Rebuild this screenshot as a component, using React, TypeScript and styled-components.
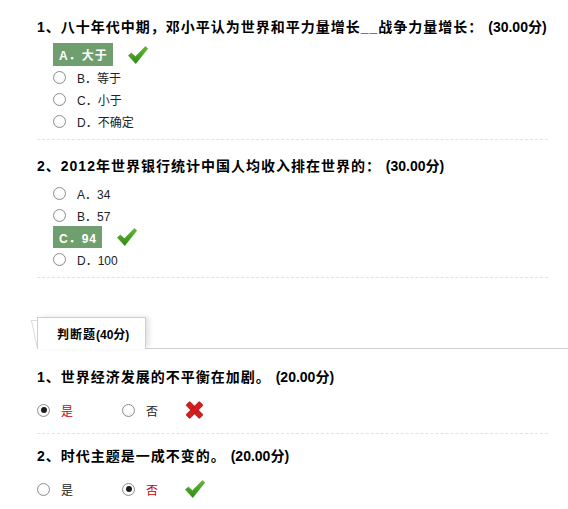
import React from "react";
import styled, { createGlobalStyle } from "styled-components";

const Global = createGlobalStyle`
  html, body { margin: 0; padding: 0; background: #fff; }
  body {
    font-family: "Liberation Sans", "Noto Sans CJK SC", sans-serif;
    color: #222;
  }
`;

const Page = styled.div`
  width: 568px;
  box-sizing: border-box;
  padding: 1px 20px 0 37px;
`;

const Block = styled.section<{ $judge?: boolean }>`
  display: flex;
  flex-direction: column;
  gap: ${(p) => (p.$judge ? 12 : 6)}px;
  padding: ${(p) => (p.$judge ? "12px 0 12px" : "16px 0 7px")};
  border-bottom: 1px dashed #e2e2e2;
  &:last-child { border-bottom: none; }
`;

const Title = styled.div`
  font-size: 14px;
  font-weight: bold;
  line-height: 20px;
  color: #000;
  letter-spacing: 1px;
  white-space: nowrap;
`;

const Score = styled.span`
  letter-spacing: 0;
`;

const OptionList = styled.div`
  display: flex;
  flex-direction: column;
  padding-left: 16px;
`;

const OptionRow = styled.div`
  display: flex;
  align-items: center;
  height: 22px;
  font-size: 12px;
  color: #222;
  white-space: nowrap;
`;

const AnswerRow = styled.div`
  display: flex;
  align-items: center;
`;

const Answer = styled.span<{ $h: number }>`
  display: flex;
  align-items: center;
  height: ${(p) => p.$h}px;
  padding: 0 5px 0 6px;
  background: #6f9f6f;
  color: #fff;
  font-size: 12px;
  font-weight: bold;
  letter-spacing: 1px;
  white-space: nowrap;
`;

const Radio = styled.span<{ $on?: boolean }>`
  flex: none;
  display: grid;
  place-items: center;
  width: 13px;
  height: 13px;
  box-sizing: border-box;
  border-radius: 50%;
  border: 1px solid #8e8e8e;
  background: radial-gradient(circle at 50% 40%, #ffffff 40%, #ececec 100%);
  margin-right: 11px;
  &::after {
    content: "";
    display: ${(p) => (p.$on ? "block" : "none")};
    width: 6px;
    height: 6px;
    border-radius: 50%;
    background: #1e1e1e;
  }
`;

const MarkWrap = styled.span<{ $gap?: number }>`
  display: inline-flex;
  margin-left: ${(p) => p.$gap ?? 15}px;
`;

const TabBar = styled.div`
  position: relative;
  z-index: 0;
  display: flex;
  margin: 39px -20px 6px 0;
  border-bottom: 1px solid #cfcfcf;
`;

const Tab = styled.div`
  position: relative;
  display: flex;
  align-items: center;
  height: 31px;
  margin-bottom: -1px;
  padding: 0 16px 0 19px;
  background: #fff;
  border: 1px solid #cfcfcf;
  border-bottom: none;
  box-shadow: 4px -1px 5px -1px rgba(0, 0, 0, 0.12);
  font-size: 12px;
  font-weight: bold;
  color: #000;
  letter-spacing: 1px;
  white-space: nowrap;
  &::before {
    content: "";
    position: absolute;
    left: -1px;
    top: 2px;
    bottom: 0;
    width: 30px;
    border-left: 1px solid #dcdcdc;
    border-top: 1px solid #dcdcdc;
    transform: skewX(12deg);
    transform-origin: bottom left;
    z-index: -1;
  }
`;

const JudgeRow = styled.div`
  display: grid;
  grid-template-columns: 85px 63px auto;
  align-items: center;
  height: 22px;
  font-size: 12px;
`;

const Choice = styled.span<{ $on?: boolean }>`
  display: flex;
  align-items: center;
  color: ${(p) => (p.$on ? "#cc0000" : "#222")};
`;

const Check = () => (
  <svg width="20" height="18" viewBox="0 0 20 18">
    <defs>
      <linearGradient id="ckg" x1="0" y1="0" x2="0" y2="1">
        <stop offset="0" stopColor="#66b836" />
        <stop offset="1" stopColor="#2f8a12" />
      </linearGradient>
    </defs>
    <path
      d="M0.3 9.6 L3.4 6.9 L7.4 10.6 L17.4 0.4 L19.8 2.6 L7.8 17.8 Z"
      fill="url(#ckg)"
      stroke="#3a8f1a"
      strokeWidth="0.4"
      strokeLinejoin="round"
    />
  </svg>
);

const Cross = () => (
  <svg width="19" height="18" viewBox="0 0 19 18">
    <g fill="#d11f1f" stroke="#a01212" strokeWidth="0.6">
      <rect x="0" y="6.3" width="19" height="5.4" rx="1" transform="rotate(45 9.5 9)" />
      <rect x="0" y="6.3" width="19" height="5.4" rx="1" transform="rotate(-45 9.5 9)" />
    </g>
    <rect x="7.6" y="7.1" width="3.8" height="3.8" fill="#d11f1f" transform="rotate(45 9.5 9)" />
  </svg>
);

type Opt = { label: string; text: string };

const ChoiceQuestion = ({
  title,
  score,
  options,
  answer,
  boxH,
}: {
  title: string;
  score: string;
  options: Opt[];
  answer: number;
  boxH: number;
}) => (
  <Block>
    <Title>
      {title} <Score>{score}</Score>
    </Title>
    <OptionList>
      {options.map((o, i) =>
        i === answer ? (
          <AnswerRow key={o.label}>
            <Answer $h={boxH}>
              {o.label}．{o.text}
            </Answer>
            <MarkWrap>
              <Check />
            </MarkWrap>
          </AnswerRow>
        ) : (
          <OptionRow key={o.label}>
            <Radio />
            {o.label}．{o.text}
          </OptionRow>
        )
      )}
    </OptionList>
  </Block>
);

const JudgeQuestion = ({
  title,
  score,
  picked,
  correct,
}: {
  title: string;
  score: string;
  picked: number;
  correct: boolean;
}) => (
  <Block $judge>
    <Title>
      {title} <Score>{score}</Score>
    </Title>
    <JudgeRow>
      {["是", "否"].map((t, i) => (
        <Choice key={t} $on={picked === i}>
          <Radio $on={picked === i} />
          {t}
        </Choice>
      ))}
      <MarkWrap $gap={0}>{correct ? <Check /> : <Cross />}</MarkWrap>
    </JudgeRow>
  </Block>
);

export default function App() {
  return (
    <>
      <Global />
      <Page>
        <ChoiceQuestion
          title="1、八十年代中期，邓小平认为世界和平力量增长__战争力量增长："
          score="(30.00分)"
          options={[
            { label: "A", text: "大于" },
            { label: "B", text: "等于" },
            { label: "C", text: "小于" },
            { label: "D", text: "不确定" },
          ]}
          answer={0}
          boxH={23}
        />
        <ChoiceQuestion
          title="2、2012年世界银行统计中国人均收入排在世界的："
          score="(30.00分)"
          options={[
            { label: "A", text: "34" },
            { label: "B", text: "57" },
            { label: "C", text: "94" },
            { label: "D", text: "100" },
          ]}
          answer={2}
          boxH={22}
        />
        <TabBar>
          <Tab>
            判断题<Score>(40分)</Score>
          </Tab>
        </TabBar>
        <JudgeQuestion
          title="1、世界经济发展的不平衡在加剧。"
          score="(20.00分)"
          picked={0}
          correct={false}
        />
        <JudgeQuestion
          title="2、时代主题是一成不变的。"
          score="(20.00分)"
          picked={1}
          correct={true}
        />
      </Page>
    </>
  );
}
